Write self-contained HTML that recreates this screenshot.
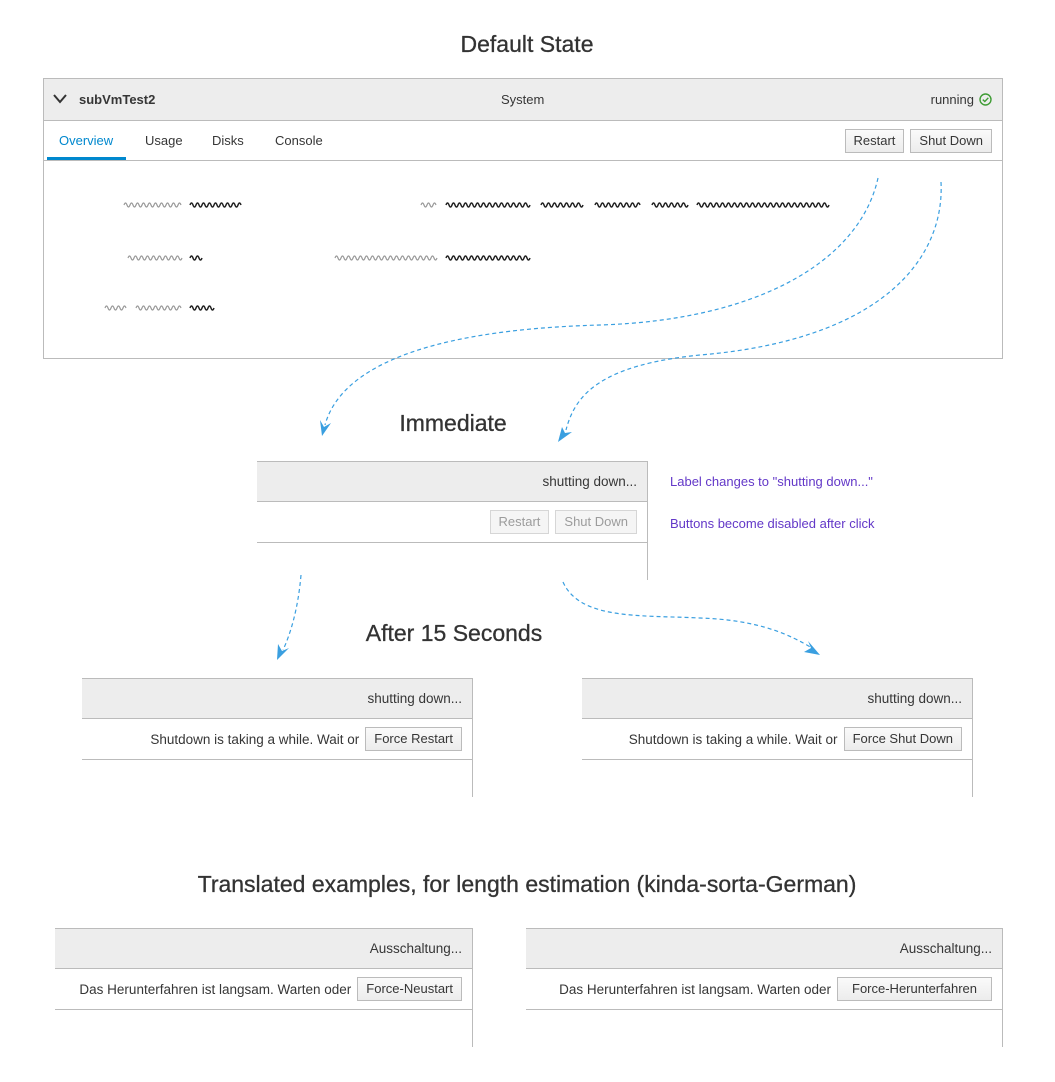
<!DOCTYPE html>
<html><head><meta charset="utf-8"><style>
body{margin:0;width:1055px;height:1082px;background:#fff;font-family:"Liberation Sans",sans-serif;color:#363636;position:relative;overflow:hidden}
.a{position:absolute}
.t{position:absolute;font-size:23px;color:#333;transform:translateX(-50%);white-space:nowrap;top:31px;-webkit-text-stroke:0.3px #333}
.p{position:absolute;border-right:1px solid #bbb;box-sizing:border-box}
.h{height:41px;background:#ededed;border-top:1px solid #bbb;border-bottom:1px solid #bbb;box-sizing:border-box;text-align:right;padding-right:10px;line-height:40px;font-size:13.5px}
.r{height:41px;border-bottom:1px solid #bbb;box-sizing:border-box;display:flex;justify-content:flex-end;align-items:center;padding-right:10px;font-size:13.5px}
.b{display:inline-block;height:24px;line-height:22px;box-sizing:border-box;border:1px solid #bbb;background:linear-gradient(#fafafa,#ececec);padding:0 8px;font-size:13px;color:#363636;margin-left:6px}
.d{color:#9c9c9c;border-color:#d6d6d6;background:#f5f5f5}
.n{color:#6338c8;font-size:13px}
</style></head><body>
<div class="t" style="left:527px;">Default State</div>
<div class="a" style="left:43px;top:78px;width:960px;height:281px;border:1px solid #bbb;box-sizing:border-box">
 <div style="height:42px;background:#ededed;border-bottom:1px solid #bbb;box-sizing:border-box;position:relative;font-size:13px;line-height:41px">
  <svg class="a" style="left:9px;top:15px" width="14" height="10"><path d="M1 1 L7 8 L13 1" fill="none" stroke="#333" stroke-width="2"/></svg>
  <span class="a" style="left:35px;font-weight:bold">subVmTest2</span>
  <span class="a" style="left:457px">System</span>
  <span class="a" style="right:28px">running</span>
  <svg class="a" style="right:10px;top:14px" width="13" height="13"><circle cx="6.5" cy="6.5" r="5.5" fill="none" stroke="#3f9c35" stroke-width="1.4"/><path d="M3.8 6.6 L5.8 8.5 L9.3 4.8" fill="none" stroke="#3f9c35" stroke-width="1.4"/></svg>
 </div>
 <div style="height:40px;border-bottom:1px solid #bbb;box-sizing:border-box;position:relative;font-size:13px;line-height:38px">
  <span class="a" style="left:15px;top:1px;color:#0088ce">Overview</span>
  <div class="a" style="left:3px;top:36px;width:79px;height:3px;background:#0088ce"></div>
  <span class="a" style="left:101px;top:1px">Usage</span>
  <span class="a" style="left:168px;top:1px">Disks</span>
  <span class="a" style="left:231px;top:1px">Console</span>
  <div class="a" style="right:10px;top:8px;display:flex;line-height:22px"><span class="b">Restart</span><span class="b">Shut Down</span></div>
 </div>
</div>
<svg class="a" style="left:0;top:0" width="1055" height="1082">
<g fill="none" stroke="#999" stroke-width="1.2">
<path d="M124 205q1.5 -4 3 0t3 0t3 0t3 0t3 0t3 0t3 0t3 0t3 0t3 0t3 0t3 0t3 0t3 0t3 0t3 0t3 0t3 0t3 0"/>
<path d="M421 205q1.5 -4 3 0t3 0t3 0t3 0t3 0"/>
<path d="M128 258q1.5 -4 3 0t3 0t3 0t3 0t3 0t3 0t3 0t3 0t3 0t3 0t3 0t3 0t3 0t3 0t3 0t3 0t3 0t3 0"/>
<path d="M335 258q1.5 -4 3 0t3 0t3 0t3 0t3 0t3 0t3 0t3 0t3 0t3 0t3 0t3 0t3 0t3 0t3 0t3 0t3 0t3 0t3 0t3 0t3 0t3 0t3 0t3 0t3 0t3 0t3 0t3 0t3 0t3 0t3 0t3 0t3 0t3 0"/>
<path d="M105 308q1.5 -4 3 0t3 0t3 0t3 0t3 0t3 0t3 0"/>
<path d="M136 308q1.5 -4 3 0t3 0t3 0t3 0t3 0t3 0t3 0t3 0t3 0t3 0t3 0t3 0t3 0t3 0t3 0"/>
</g>
<g fill="none" stroke="#222" stroke-width="1.5">
<path d="M190 205q1.5 -4 3 0t3 0t3 0t3 0t3 0t3 0t3 0t3 0t3 0t3 0t3 0t3 0t3 0t3 0t3 0t3 0t3 0"/>
<path d="M446 205q1.5 -4 3 0t3 0t3 0t3 0t3 0t3 0t3 0t3 0t3 0t3 0t3 0t3 0t3 0t3 0t3 0t3 0t3 0t3 0t3 0t3 0t3 0t3 0t3 0t3 0t3 0t3 0t3 0t3 0"/>
<path d="M541 205q1.5 -4 3 0t3 0t3 0t3 0t3 0t3 0t3 0t3 0t3 0t3 0t3 0t3 0t3 0t3 0"/>
<path d="M595 205q1.5 -4 3 0t3 0t3 0t3 0t3 0t3 0t3 0t3 0t3 0t3 0t3 0t3 0t3 0t3 0t3 0"/>
<path d="M652 205q1.5 -4 3 0t3 0t3 0t3 0t3 0t3 0t3 0t3 0t3 0t3 0t3 0t3 0"/>
<path d="M697 205q1.5 -4 3 0t3 0t3 0t3 0t3 0t3 0t3 0t3 0t3 0t3 0t3 0t3 0t3 0t3 0t3 0t3 0t3 0t3 0t3 0t3 0t3 0t3 0t3 0t3 0t3 0t3 0t3 0t3 0t3 0t3 0t3 0t3 0t3 0t3 0t3 0t3 0t3 0t3 0t3 0t3 0t3 0t3 0t3 0t3 0"/>
<path d="M190 258q1.5 -4 3 0t3 0t3 0t3 0"/>
<path d="M446 258q1.5 -4 3 0t3 0t3 0t3 0t3 0t3 0t3 0t3 0t3 0t3 0t3 0t3 0t3 0t3 0t3 0t3 0t3 0t3 0t3 0t3 0t3 0t3 0t3 0t3 0t3 0t3 0t3 0t3 0"/>
<path d="M190 308q1.5 -4 3 0t3 0t3 0t3 0t3 0t3 0t3 0t3 0"/>
</g>
<g fill="none" stroke="#3a9fe0" stroke-width="1.2" stroke-dasharray="4,3">
<path d="M878 178 C860 260 760 320 600 325 C420 330 340 370 325 425"/>
<path d="M941 182 C945 260 880 340 700 355 C600 365 575 395 566 430"/>
<path d="M301 575 C298 610 290 635 283 650"/>
<path d="M563 582 C580 620 640 615 700 618 C760 620 790 635 812 648"/>
</g>
<g fill="#3a9fe0">
<path d="M322 436 L320 420 L324 427 L331 423 Z"/>
<path d="M558 442 L562 427 L565 433 L572 432 Z"/>
<path d="M277 660 L278 644 L282 651 L289 648 Z"/>
<path d="M820 655 L804 652 L811 648 L808 641 Z"/>
</g>
</svg>
<div class="t" style="left:453px;top:410px">Immediate</div>
<div class="p" style="left:257px;top:461px;width:391px;height:119px"><div class="h">shutting down...</div><div class="r"><span class="b d">Restart</span><span class="b d">Shut Down</span></div></div>
<div class="a n" style="left:670px;top:474px">Label changes to "shutting down..."</div>
<div class="a n" style="left:670px;top:516px">Buttons become disabled after click</div>
<div class="t" style="left:454px;top:620px">After 15 Seconds</div>
<div class="p" style="left:82px;top:678px;width:391px;height:119px"><div class="h">shutting down...</div><div class="r">Shutdown is taking a while. Wait or <span class="b">Force Restart</span></div></div>
<div class="p" style="left:582px;top:678px;width:391px;height:119px"><div class="h">shutting down...</div><div class="r">Shutdown is taking a while. Wait or <span class="b">Force Shut Down</span></div></div>
<div class="t" style="left:527px;top:871px">Translated examples, for length estimation (kinda-sorta-German)</div>
<div class="p" style="left:55px;top:928px;width:418px;height:119px"><div class="h">Ausschaltung...</div><div class="r">Das Herunterfahren ist langsam. Warten oder <span class="b">Force-Neustart</span></div></div>
<div class="p" style="left:526px;top:928px;width:477px;height:119px"><div class="h">Ausschaltung...</div><div class="r">Das Herunterfahren ist langsam. Warten oder <span class="b" style="padding:0 14px">Force-Herunterfahren</span></div></div>
</body></html>
